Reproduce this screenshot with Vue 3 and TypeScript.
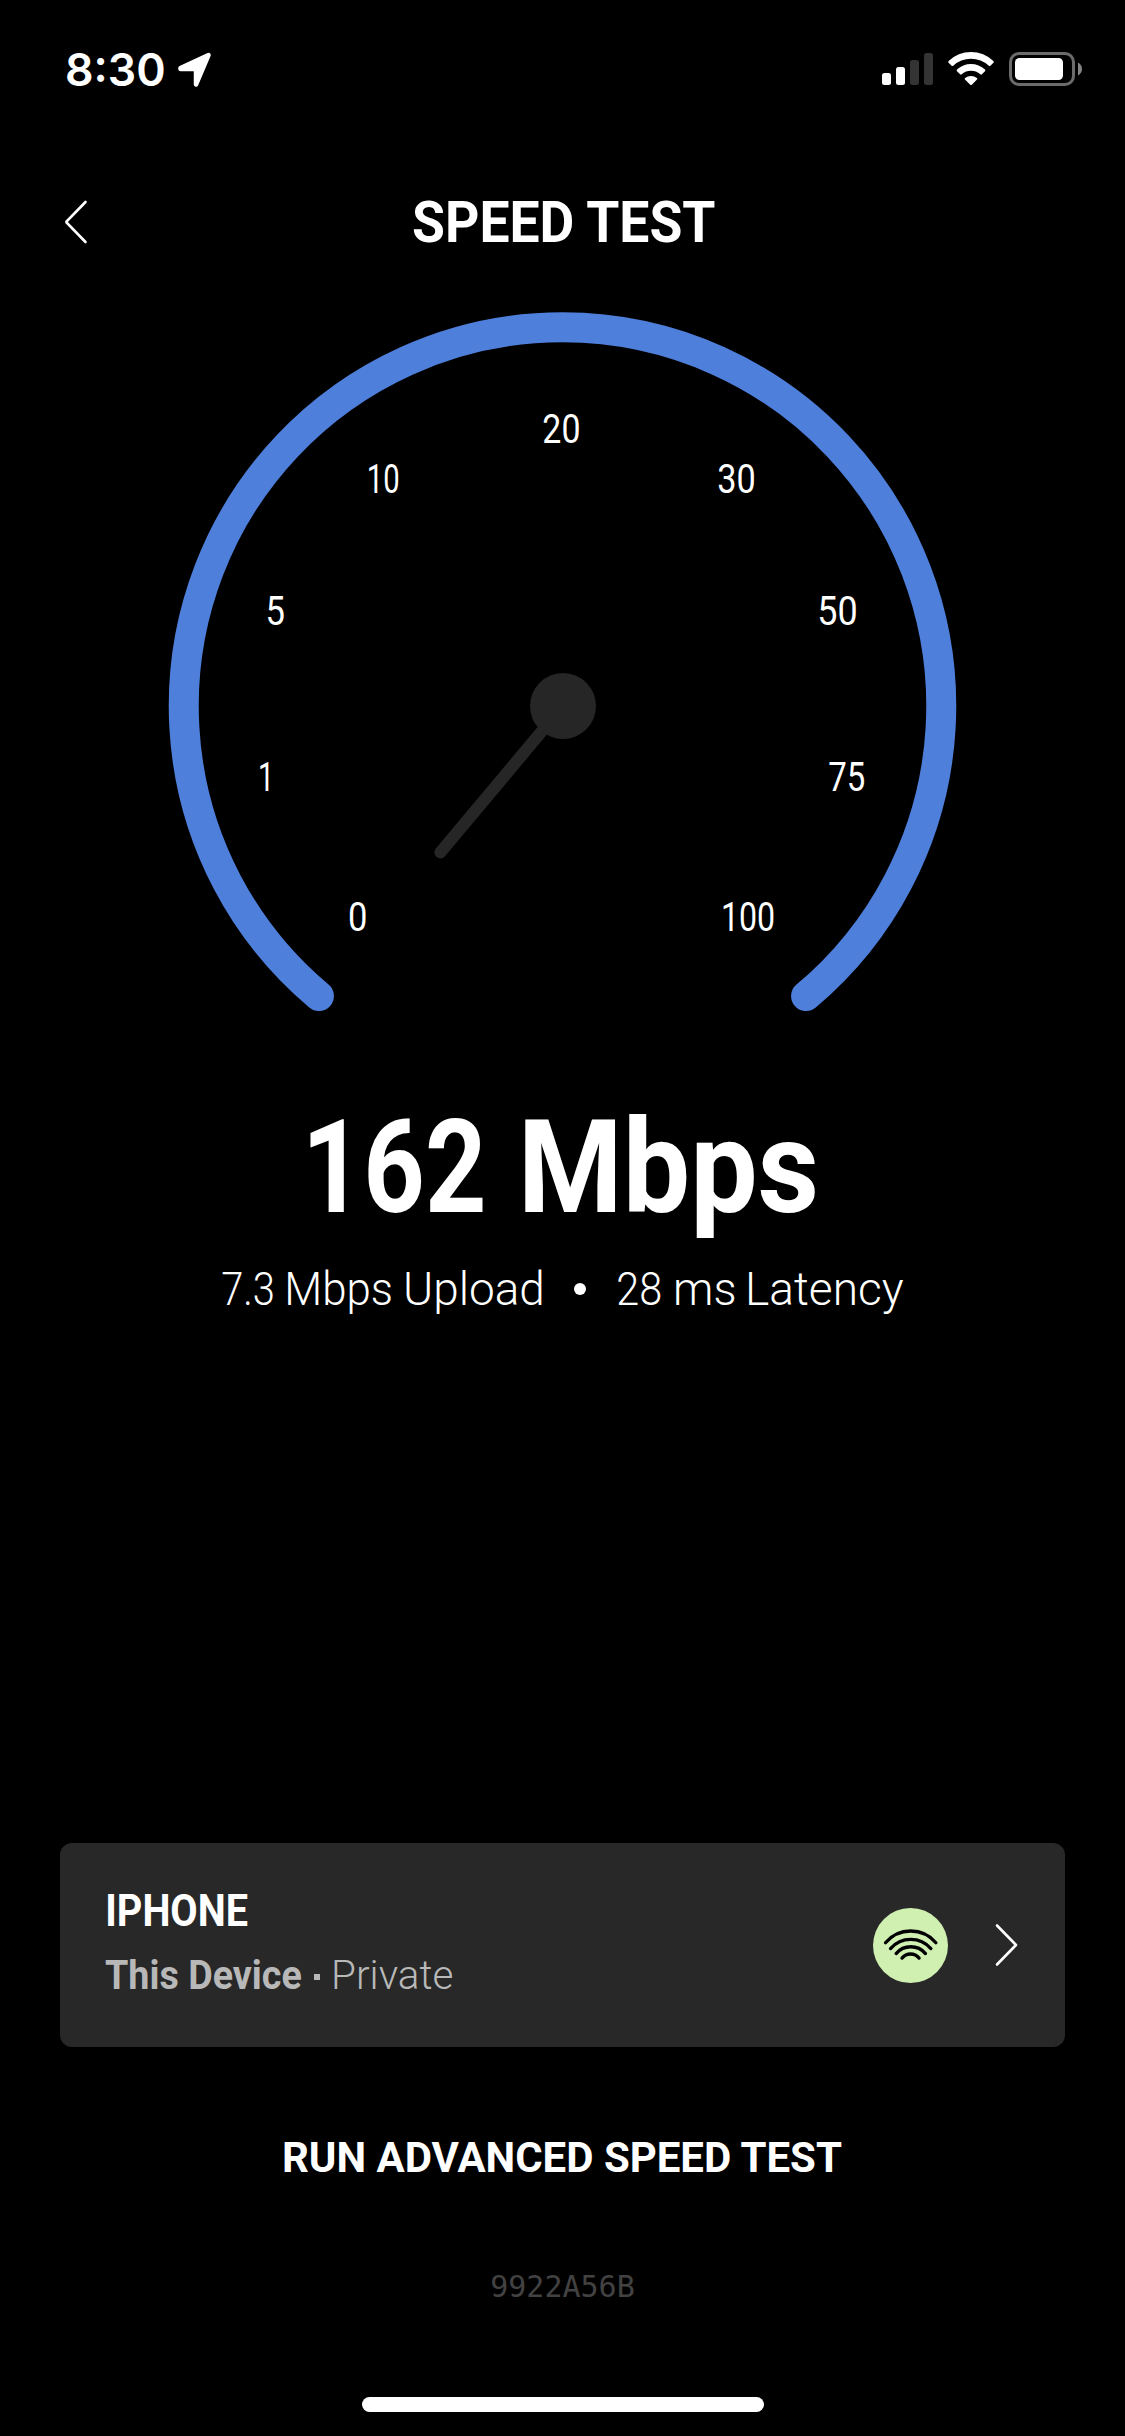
<script setup lang="ts">
import type { CSSProperties } from 'vue'

interface Fit {
  scale: number
  left: number
  advance: number
}

interface Word {
  text: string
  width: number
}

interface GaugeLabel extends Word {
  x: number
  y: number
}

const context = document.createElement('canvas').getContext('2d')!

// Horizontal scale that condenses a run of text to the given visible width
function measure(text: string, font: string, width: number): Fit {
  context.font = font
  const m = context.measureText(text)
  const ink = m.actualBoundingBoxLeft + m.actualBoundingBoxRight
  return { scale: width / ink, left: m.actualBoundingBoxLeft, advance: m.width }
}

function condensed(text: string, weight: number, size: number, width: number, family = 'Roboto'): CSSProperties {
  const fit = measure(text, `${weight} ${size}px "${family}"`, width)
  return {
    width: `${fit.advance}px`,
    marginRight: `${width - fit.advance}px`,
    fontWeight: weight,
    fontSize: `${size}px`,
    transform: `translateX(${fit.left * fit.scale}px) scaleX(${fit.scale})`,
  }
}

const speed: Word[] = [
  { text: '162', width: 172.5 },
  { text: 'Mbps', width: 290.5 },
]

const upload: Word[] = [
  { text: '7.3', width: 50.5 },
  { text: 'Mbps', width: 102.5 },
  { text: 'Upload', width: 136 },
]

const latency: Word[] = [
  { text: '28', width: 42.5 },
  { text: 'ms', width: 58 },
  { text: 'Latency', width: 154.5 },
]

const labels: GaugeLabel[] = [
  { text: '0', x: 349.8, y: 931.3, width: 16.4 },
  { text: '1', x: 260.2, y: 790.8, width: 8.6 },
  { text: '5', x: 268.2, y: 624.8, width: 15.6 },
  { text: '10', x: 369, y: 492.8, width: 29.6 },
  { text: '20', x: 543.2, y: 443, width: 36 },
  { text: '30', x: 718.2, y: 492.8, width: 36.4 },
  { text: '50', x: 820, y: 624.8, width: 36.4 },
  { text: '75', x: 829, y: 790.8, width: 35 },
  { text: '100', x: 723.4, y: 931.3, width: 50.6 },
]

function labelTransform(label: GaugeLabel): string {
  const fit = measure(label.text, '400 40px "Roboto"', label.width)
  return `translate(${label.x + fit.left * fit.scale} ${label.y}) scale(${fit.scale} 1)`
}
</script>

<template>
  <main class="screen">
    <div class="status">
      <span class="time fit" :style="condensed('8:30', 600, 45, 97, 'Inter')">8:30</span>
      <svg class="location" width="36" height="36" viewBox="0 0 36 36">
        <path d="M3.5 16 31.5 3 19 32.5V17H3.5Z" fill="#fff" stroke="#fff" stroke-width="4.5" stroke-linejoin="round" />
      </svg>
      <svg class="indicators" width="202" height="36" viewBox="881 51 202 36">
        <g fill="#fff">
          <rect x="882" y="73" width="9" height="12" rx="2.5" />
          <rect x="896" y="67" width="9" height="18" rx="2.5" />
          <rect x="910" y="60" width="9" height="25" rx="2.5" fill="#343434" />
          <rect x="924" y="53" width="9" height="32" rx="2.5" fill="#343434" />
          <path d="M948.6 61.1a32 32 0 0 1 44.8 0q.7.8 0 1.6l-3 3q-.8.8-1.6 0a26 26 0 0 0-35.6 0q-.8.8-1.6 0l-3-3q-.7-.8 0-1.6Z" />
          <path d="M957 69.6a20.3 20.3 0 0 1 28 0q.8.8 0 1.6l-3.1 3.1q-.8.7-1.6 0a14.2 14.2 0 0 0-18.6 0q-.8.7-1.6 0l-3.1-3.1q-.8-.8 0-1.6Z" />
          <path d="M965.1 78a9.5 9.5 0 0 1 11.8 0q.9.8.1 1.6l-5.2 5.1q-.8.7-1.6 0l-5.2-5.1q-.8-.8.1-1.6Z" />
        </g>
        <rect x="1010.500" y="53.500" width="63" height="31" rx="8.500" fill="none" stroke="#6b6b6b" stroke-width="3" />
        <rect x="1015" y="58" width="48" height="22" rx="4.500" fill="#fff" />
        <path d="M1078 62.500c5.300 2.600 5.300 10.400 0 13Z" fill="#858585" />
      </svg>
    </div>

    <header class="header">
      <svg class="back" width="24" height="44" viewBox="0 0 24 44">
        <path d="M21.500 2 2.500 21.500v1L21.500 42" fill="none" stroke="#fff" stroke-width="2.600" stroke-linecap="round" />
      </svg>
      <h1 class="title fit" :style="condensed('SPEED TEST', 700, 58, 303)">SPEED TEST</h1>
    </header>

    <svg class="gauge" width="1125" height="750" viewBox="0 282 1125 750">
      <path d="M318.900 996.100A378.750 378.750 0 1 1 806.100 996.100" fill="none" stroke="#4e7fda" stroke-width="30" stroke-linecap="round" />
      <path d="M563 706 440.400 852.400" stroke="#262626" stroke-width="12" stroke-linecap="round" />
      <circle cx="563" cy="706" r="33" fill="#262626" />
      <text v-for="label in labels" :key="label.text" class="tick" :transform="labelTransform(label)">{{ label.text }}</text>
    </svg>

    <section class="speed">
      <span v-for="word in speed" :key="word.text" class="fit" :style="condensed(word.text, 700, 130.5, word.width)">{{ word.text }}</span>
    </section>
    <section class="stats">
      <div class="words">
        <span v-for="word in upload" :key="word.text" class="fit" :style="condensed(word.text, 350, 46.5, word.width)">{{ word.text }}</span>
      </div>
      <i class="dot"></i>
      <div class="words">
        <span v-for="word in latency" :key="word.text" class="fit" :style="condensed(word.text, 350, 46.5, word.width)">{{ word.text }}</span>
      </div>
    </section>

    <section class="card">
      <div class="device">
        <div class="line name"><span class="fit" :style="condensed('IPHONE', 700, 43.5, 139.5)">IPHONE</span></div>
        <div class="line detail">
          <span class="fit" :style="condensed('This Device', 700, 40.5, 196)">This Device</span>
          <i class="square"></i>
          <span class="fit" :style="condensed('Private', 300, 40.5, 118.5)">Private</span>
        </div>
      </div>
      <svg class="badge" width="75" height="75" viewBox="0 0 75 75">
        <circle cx="37.500" cy="37.500" r="37.500" fill="#d0f0b1" />
        <g fill="none" stroke="#000" stroke-width="3.300" stroke-linecap="round">
          <path d="M12.500 34.800A32.800 32.800 0 0 1 62.900 34.800" />
          <path d="M17.500 40.600A26.700 26.700 0 0 1 57.900 40.600" />
          <path d="M23.100 45.600A19.200 19.200 0 0 1 52.500 45.600" />
          <path d="M29 50.100A11 11 0 0 1 46.100 50.100" />
        </g>
      </svg>
      <svg class="next" width="24" height="44" viewBox="0 0 24 44">
        <path d="M3 2.500 22 22 3 41.500" fill="none" stroke="#fff" stroke-width="2.600" stroke-linecap="round" stroke-linejoin="round" />
      </svg>
    </section>

    <div class="action">
      <span class="fit" :style="condensed('RUN ADVANCED SPEED TEST', 700, 42, 559)">RUN ADVANCED SPEED TEST</span>
    </div>
    <div class="code">9922A56B</div>
    <div class="home"></div>
  </main>
</template>

<style>
body {
  margin: 0;
  background: #000;
}
</style>

<style scoped>
.screen {
  box-sizing: border-box;
  width: 1125px;
  height: 2436px;
  overflow: hidden;
  display: flex;
  flex-direction: column;
  background: #000;
  color: #fff;
  font-family: Roboto, sans-serif;
}

.fit {
  display: block;
  flex: none;
  white-space: nowrap;
  transform-origin: 0 50%;
}

.status {
  box-sizing: border-box;
  height: 162px;
  padding: 48px 42px 0 66.5px;
  display: flex;
  align-items: flex-start;
}

.time {
  font-family: Inter, sans-serif;
  line-height: 43px;
}

.location {
  margin: 4px 0 0 13px;
}

.indicators {
  margin: 3px 0 0 auto;
}

.header {
  height: 120px;
  padding-left: 64px;
  display: flex;
  align-items: center;
}

.title {
  margin: 0 0 0 324.5px;
  line-height: 60px;
}

.gauge {
  display: block;
  flex: none;
}

.tick {
  font: 400 40px Roboto, sans-serif;
  fill: #fff;
}

.speed {
  display: flex;
  gap: 42.5px;
  margin: 60px 0 0 309.5px;
  line-height: 152px;
}

.stats {
  display: flex;
  align-items: center;
  margin: 18px 0 0 222px;
  line-height: 54px;
}

.words {
  display: flex;
  gap: 15.5px;
}

.dot {
  width: 12.5px;
  height: 12.5px;
  margin: 0 31.5px;
  border-radius: 50%;
  background: #fff;
}

.card {
  box-sizing: border-box;
  height: 204px;
  margin: 527px 60px 0;
  padding: 0 47px 0 45px;
  display: flex;
  align-items: center;
  border-radius: 12px;
  background: #282828;
}

.device {
  display: flex;
  flex-direction: column;
  gap: 13px;
  padding-bottom: 3px;
}

.line {
  display: flex;
  align-items: center;
  height: 50px;
  line-height: 50px;
}

.name {
  padding-left: 3px;
}

.detail {
  color: #b8b8b8;
}

.square {
  width: 6px;
  height: 6px;
  margin: 4px 14px 0 12.5px;
  background: #b8b8b8;
}

.badge {
  margin-left: auto;
}

.next {
  margin-left: 46px;
}

.action {
  margin: 81px 0 0 284px;
  line-height: 60px;
}

.code {
  margin-top: 79px;
  color: #424242;
  font: 30px/40px "DejaVu Sans Mono", monospace;
  text-align: center;
}

.home {
  width: 402px;
  height: 15px;
  margin: 90px 0 0 362px;
  border-radius: 8px;
  background: #fff;
}
</style>
